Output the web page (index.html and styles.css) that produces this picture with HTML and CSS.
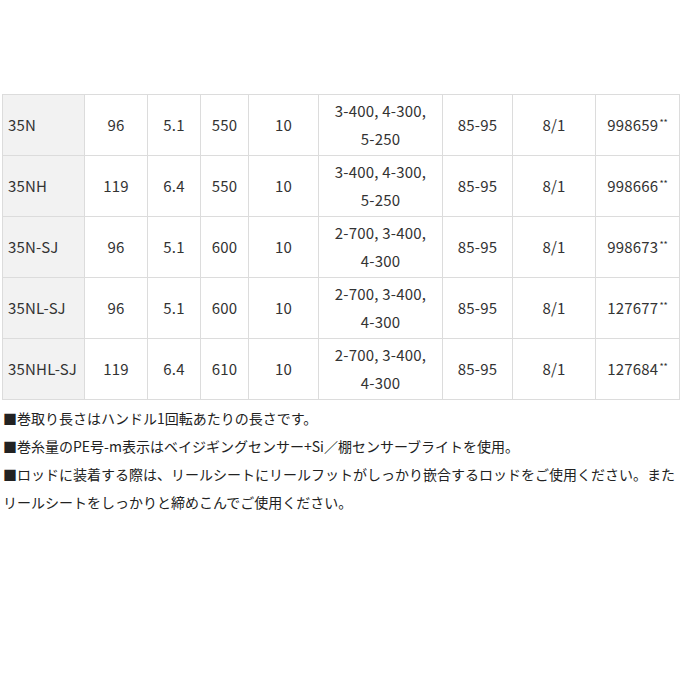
FILE: index.html
```html
<!DOCTYPE html>
<html lang="ja">
<head>
<meta charset="utf-8">
<link rel="stylesheet" href="styles.css">
</head>
<body>
<div class="page">
<table class="spec">
<colgroup>
<col class="c1"><col class="c2"><col class="c3"><col class="c4"><col class="c5"><col class="c6"><col class="c7"><col class="c8"><col class="c9">
</colgroup>
<tbody>
<tr><th>35N</th><td>96</td><td>5.1</td><td>550</td><td>10</td><td>3-400, 4-300,<br>5-250</td><td>85-95</td><td>8/1</td><td>998659<span class="mark">**</span></td></tr>
<tr><th>35NH</th><td>119</td><td>6.4</td><td>550</td><td>10</td><td>3-400, 4-300,<br>5-250</td><td>85-95</td><td>8/1</td><td>998666<span class="mark">**</span></td></tr>
<tr><th>35N-SJ</th><td>96</td><td>5.1</td><td>600</td><td>10</td><td>2-700, 3-400,<br>4-300</td><td>85-95</td><td>8/1</td><td>998673<span class="mark">**</span></td></tr>
<tr><th>35NL-SJ</th><td>96</td><td>5.1</td><td>600</td><td>10</td><td>2-700, 3-400,<br>4-300</td><td>85-95</td><td>8/1</td><td>127677<span class="mark">**</span></td></tr>
<tr><th>35NHL-SJ</th><td>119</td><td>6.4</td><td>610</td><td>10</td><td>2-700, 3-400,<br>4-300</td><td>85-95</td><td>8/1</td><td>127684<span class="mark">**</span></td></tr>
</tbody>
</table>
<div class="notes">
<p>■巻取り長さはハンドル1回転あたりの長さです。</p>
<p>■巻糸量のPE号-m表示はベイジギングセンサー+Si／棚センサーブライトを使用。</p>
<p>■ロッドに装着する際は、リールシートにリールフットがしっかり嵌合するロッドをご使用ください。またリールシートをしっかりと締めこんでご使用ください。</p>
</div>
</div>
</body>
</html>
```
FILE: styles.css
```css
html, body {
  margin: 0;
  padding: 0;
  background: #fff;
}
.page {
  padding: 94px 0 0 2px;
  font-family: "Noto Sans CJK JP", "Noto Sans", sans-serif;
}
.spec {
  border-collapse: collapse;
  table-layout: fixed;
  width: 678px;
  color: #333;
  font-size: 15px;
  letter-spacing: 0.2px;
}
.c1 { width: 82px; }
.c2 { width: 63px; }
.c3 { width: 53px; }
.c4 { width: 48px; }
.c5 { width: 70px; }
.c6 { width: 124px; }
.c7 { width: 70px; }
.c8 { width: 83px; }
.c9 { width: 84px; }
.spec tr { height: 61px; }
.spec th, .spec td {
  border: 1px solid #dcdcdc;
  padding: 0 2px;
  line-height: 28px;
  font-weight: 400;
  text-align: center;
  vertical-align: middle;
  white-space: nowrap;
}
.spec th {
  background: #f2f2f2;
  text-align: left;
  padding-left: 5px;
}
.mark {
  font-size: 9px;
  letter-spacing: 0;
  vertical-align: 5px;
  line-height: 0;
  margin-left: 1px;
}
.notes {
  width: 676px;
  padding-top: 4px;
  color: #222;
  font-size: 14px;
  line-height: 28px;
}
.notes p {
  margin: 0;
  padding-left: 1px;
}
```
